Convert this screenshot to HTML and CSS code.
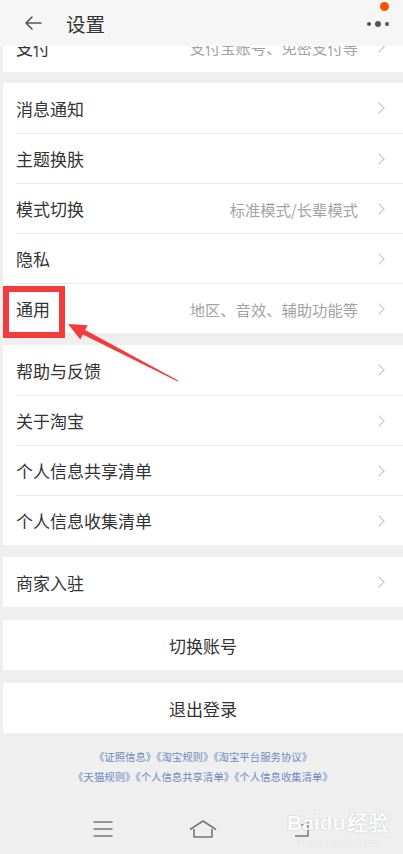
FILE: index.html
```html
<!DOCTYPE html>
<html lang="zh-CN">
<head>
  <meta charset="UTF-8">
  <meta name="viewport" content="width=device-width, initial-scale=1">
  <title>设置</title>
  <link rel="stylesheet" href="styles.css">
</head>
<body>
  <div class="page">
    <header class="topbar">
      <svg class="back" width="18" height="14" viewBox="0 0 18 14">
        <path d="M17 7H2M8 1L2 7l6 6" fill="none" stroke="#555" stroke-width="1.6" stroke-linecap="round" stroke-linejoin="round"/>
      </svg>
      <h1>设置</h1>
      <div class="more">
        <span class="dot"></span><span class="dot big"></span><span class="dot"></span>
        <span class="badge"></span>
      </div>
    </header>

    <main class="list">
      <section class="group first">
        <div class="row"><span class="label">支付</span><span class="sub">支付宝账号、免密支付等</span><i class="chev"></i></div>
      </section>

      <section class="group">
        <div class="row"><span class="label">消息通知</span><i class="chev"></i></div>
        <div class="row"><span class="label">主题换肤</span><i class="chev"></i></div>
        <div class="row"><span class="label">模式切换</span><span class="sub">标准模式/长辈模式</span><i class="chev"></i></div>
        <div class="row"><span class="label">隐私</span><i class="chev"></i></div>
        <div class="row"><span class="label">通用</span><span class="sub">地区、音效、辅助功能等</span><i class="chev"></i></div>
      </section>

      <section class="group">
        <div class="row"><span class="label">帮助与反馈</span><i class="chev"></i></div>
        <div class="row"><span class="label">关于淘宝</span><i class="chev"></i></div>
        <div class="row"><span class="label">个人信息共享清单</span><i class="chev"></i></div>
        <div class="row"><span class="label">个人信息收集清单</span><i class="chev"></i></div>
      </section>

      <section class="group">
        <div class="row"><span class="label">商家入驻</span><i class="chev"></i></div>
      </section>

      <section class="group action">
        <div class="row center">切换账号</div>
      </section>

      <section class="group action">
        <div class="row center">退出登录</div>
      </section>

      <footer class="links">
        <p>《证照信息》《淘宝规则》《淘宝平台服务协议》</p>
        <p>《天猫规则》《个人信息共享清单》《个人信息收集清单》</p>
      </footer>
    </main>

    <nav class="sysnav">
      <svg width="28" height="20" viewBox="0 0 28 20">
        <path d="M4.5 3h19M4.5 10h19M4.5 17h19" stroke="#777" stroke-width="1.6"/>
      </svg>
      <svg width="28" height="20" viewBox="0 0 28 20">
        <path d="M1 10.5L14 2l13 8.5M5 10v8h18v-8" fill="none" stroke="#777" stroke-width="1.6" stroke-linejoin="round"/>
      </svg>
      <svg width="28" height="20" viewBox="0 0 28 20">
        <path d="M11 6h4M19 3v14h-13" fill="none" stroke="#777" stroke-width="1.5"/>
      </svg>
    </nav>

    <!-- annotation layer -->
    <div class="mark-box"></div>
    <svg class="mark-arrow" width="403" height="854" viewBox="0 0 403 854">
      <polygon points="68,324 87.7,325.2 85.2,330.1 178.2,380.6 177.8,381.4 82.8,334.5 80.3,339.4" fill="#f33b3b"/>
    </svg>
    <div class="watermark">
      <span class="wm-logo">Bai<b>du</b>经验</span>
      <span class="wm-url">jingyan.baidu.com</span>
    </div>
  </div>
</body>
</html>
```

FILE: styles.css
```css
/* Base */
body {
  margin: 0;
  background: #efefef;
  font-family: "Noto Sans CJK SC", "Noto Sans", sans-serif;
  color: #333;
}
.page {
  position: relative;
  width: 403px;
  height: 854px;
  overflow: hidden;
  background: #efefef;
}

/* Top bar */
.topbar {
  position: relative;
  z-index: 2;
  height: 46px;
  display: flex;
  align-items: center;
  background: #f6f6f6;
  padding: 0 0 0 24px;
}
.back { margin-right: 24px; }
.topbar h1 {
  margin: 0;
  font-size: 19.5px;
  font-weight: 400;
  color: #333;
}
.more {
  position: relative;
  margin-left: auto;
  width: 30px;
  height: 46px;
  margin-right: 10px;
  display: flex;
  align-items: center;
  justify-content: center;
  gap: 4px;
  padding-top: 2px;
  box-sizing: border-box;
}
.dot {
  width: 4px;
  height: 4px;
  border-radius: 50%;
  background: #555;
}
.dot.big { width: 6px; height: 6px; }
.badge {
  position: absolute;
  top: 2px;
  right: 4px;
  width: 9px;
  height: 9px;
  border-radius: 50%;
  background: #ff5000;
}

/* Groups & rows */
.list { padding-left: 3px; }
.group {
  background: #fff;
  margin-bottom: 12px;
}
.group.first {
  margin-top: -24px;
  margin-bottom: 11px;
}
.group.action { margin-top: 13px; margin-bottom: 0; }
.row {
  height: 50px;
  margin-left: 13px;
  padding-right: 20px;
  display: flex;
  align-items: center;
  box-sizing: border-box;
}
.row + .row { border-top: 1px solid #e9e9e9; }
.label {
  font-size: 17px;
  color: #333;
}
.sub {
  margin-left: auto;
  font-size: 15.3px;
  color: #a3a3a3;
}
.chev {
  width: 7px;
  height: 7px;
  margin-left: 17px;
  border-top: 1.4px solid #c4c4c4;
  border-right: 1.4px solid #c4c4c4;
  transform: rotate(45deg);
  flex-shrink: 0;
}
.label + .chev { margin-left: auto; }
.row.center {
  justify-content: center;
  margin-left: 0;
  padding-right: 0;
  font-size: 17px;
  color: #333;
}

/* Footer links */
.links {
  padding: 14px 0 0;
  height: 57px;
  text-align: center;
}
.links p {
  margin: 0;
  font-size: 10.4px;
  line-height: 20px;
  color: #6a8bc0;
}

/* System navigation */
.sysnav {
  height: 50px;
  padding-left: 3px;
  display: flex;
  align-items: center;
  justify-content: center;
  gap: 72px;
}

/* Annotation */
.mark-box {
  position: absolute;
  left: 3px;
  top: 286px;
  width: 50px;
  height: 40px;
  border: 6px solid #f33b3b;
}
.mark-arrow {
  position: absolute;
  left: 0;
  top: 0;
  pointer-events: none;
}
.watermark {
  position: absolute;
  left: 287px;
  top: 806px;
  display: flex;
  flex-direction: column;
  align-items: center;
  color: #fff;
  opacity: 0.85;
}
.wm-logo {
  font-family: "Liberation Sans", sans-serif;
  font-size: 21px;
  font-weight: 700;
  text-shadow: 0 0 1px #bbb, 0 0 1px #bbb;
}
.wm-logo b { margin-right: 2px; }
.wm-url {
  font-family: "Liberation Serif", serif;
  font-size: 11px;
  text-shadow: 0 0 1px #bbb;
}
```
